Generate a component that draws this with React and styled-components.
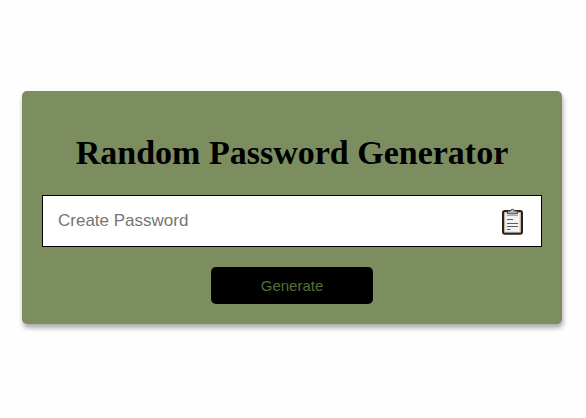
import React from "react";
import styled, { createGlobalStyle } from "styled-components";

const GlobalStyle = createGlobalStyle`
  * { margin: 0; padding: 0; box-sizing: border-box; }
  body { background: #fefefe; }
`;

const Page = styled.main`
  height: 418px;
  padding: 91px 24px 0 22px;
`;

const Card = styled.section`
  display: flex;
  flex-direction: column;
  align-items: center;
  width: 540px;
  height: 233px;
  padding: 40px 20px 20px;
  border-radius: 5px;
  background: #7c8e60;
  box-shadow: 1px 4px 5px rgba(0, 0, 0, 0.33);
`;

const Title = styled.h1`
  height: 44px;
  font: bold 34px/43px "Liberation Serif", "Times New Roman", serif;
  color: #000;
  white-space: nowrap;
`;

const Field = styled.div`
  display: flex;
  align-items: center;
  width: 500px;
  height: 52px;
  margin: 20px 0;
  padding: 0 17px 0 15px;
  border: 1px solid #000;
  background: #fff;
`;

const PasswordInput = styled.input`
  flex: 1;
  min-width: 0;
  height: 50px;
  border: 0;
  outline: 0;
  background: transparent;
  font: 17px "Liberation Sans", Arial, sans-serif;
  &::placeholder { color: #757575; opacity: 1; }
`;

const CopyButton = styled.button`
  display: flex;
  border: 0;
  background: none;
`;

const GenerateButton = styled.button`
  width: 162px;
  height: 37px;
  border: 0;
  border-radius: 5px;
  background: #000;
  color: #556f38;
  font: 15px "Liberation Sans", Arial, sans-serif;
`;

function ClipboardIcon() {
  return (
    <svg width="24" height="28" viewBox="0 0 24 28">
      <rect x="3" y="4" width="19" height="22.8" rx="1.8" fill="#cdb5a3" stroke="#2b221e" strokeWidth="2" />
      <path d="M5.3 6h14.4v18.8H5.3z" fill="#f3f2f5" />
      <path d="M7.5 6.8V4.9q0-.9 1-.9h1.8Q10.8 2.3 12.5 2.3t2.2 1.7h1.8q1 0 1 .9v1.9z" fill="#b4b3b2" stroke="#45413f" strokeWidth="1" />
      <path d="M7 8.5h11" stroke="#aaa9ae" strokeWidth="1" />
      <path d="M7 12.5h6M7 16.5h11M7 19.5h11M7 22.5h3.5" stroke="#5b5a64" strokeWidth="1" />
    </svg>
  );
}

export default function App() {
  return (
    <>
      <GlobalStyle />
      <Page>
        <Card>
          <Title>Random Password Generator</Title>
          <Field>
            <PasswordInput type="text" placeholder="Create Password" />
            <CopyButton type="button" aria-label="Copy password">
              <ClipboardIcon />
            </CopyButton>
          </Field>
          <GenerateButton type="button">Generate</GenerateButton>
        </Card>
      </Page>
    </>
  );
}
